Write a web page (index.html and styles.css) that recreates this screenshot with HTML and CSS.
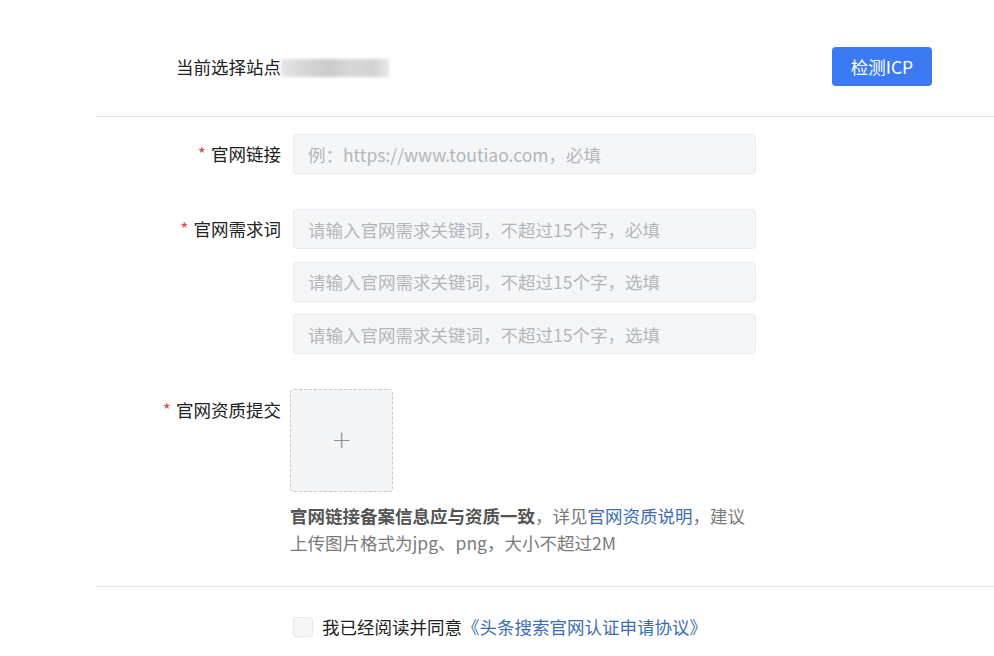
FILE: index.html
```html
<!DOCTYPE html>
<html lang="zh-CN">
<head>
<meta charset="utf-8">
<title>官网认证</title>
<link rel="stylesheet" href="styles.css">
</head>
<body>
<div class="page">
  <div class="header">
    <div class="site">
      <span class="site-label">当前选择站点</span>
      <span class="site-blur"></span>
    </div>
    <button class="btn-primary" type="button">检测ICP</button>
  </div>

  <div class="form">
    <div class="row">
      <div class="label"><span class="star">*</span>官网链接</div>
      <div class="field">
        <div class="input"><span class="ph">例：https://www.toutiao.com，必填</span></div>
      </div>
    </div>

    <div class="row row-gap">
      <div class="label"><span class="star">*</span>官网需求词</div>
      <div class="field stack">
        <div class="input"><span class="ph">请输入官网需求关键词，不超过15个字，必填</span></div>
        <div class="input"><span class="ph">请输入官网需求关键词，不超过15个字，选填</span></div>
        <div class="input"><span class="ph">请输入官网需求关键词，不超过15个字，选填</span></div>
      </div>
    </div>

    <div class="row row-gap">
      <div class="label label-upload"><span class="star">*</span>官网资质提交</div>
      <div class="field field-upload">
        <div class="upload"><span class="plus">+</span></div>
        <p class="help"><strong>官网链接备案信息应与资质一致</strong>，详见<span class="link">官网资质说明</span>，建议<br>上传图片格式为jpg、png，大小不超过2M</p>
      </div>
    </div>
  </div>

  <div class="agree">
    <span class="checkbox"></span>
    <span class="agree-text">我已经阅读并同意<span class="link">《头条搜索官网认证申请协议》</span></span>
  </div>
</div>
</body>
</html>
```

FILE: styles.css
```css
* {
  box-sizing: border-box;
}

html, body {
  margin: 0;
  padding: 0;
  background: #ffffff;
}

body {
  font-family: "Noto Sans CJK SC", "Noto Sans", sans-serif;
  font-size: 17.5px;
  color: #222222;
  width: 994px;
  height: 656px;
  overflow: hidden;
}

.page {
  margin-left: 96px;
}

.header {
  height: 117px;
  border-bottom: 1px solid #e3e3e3;
  display: flex;
  align-items: center;
  justify-content: space-between;
  padding: 18px 62px 0 80px;
}

.site {
  display: flex;
  align-items: center;
  margin-top: 0;
}

.site-label {
  color: #222222;
  line-height: 24px;
}

.site-blur {
  display: block;
  width: 108px;
  height: 18px;
  margin-top: 2px;
  background: linear-gradient(90deg, #e6e6e6 0%, #d4d4d4 25%, #cccccc 45%, #d8d8d8 65%, #d2d2d2 85%, #e8e8e8 100%);
  filter: blur(1.5px);
}

.btn-primary {
  width: 100px;
  height: 39px;
  border: none;
  border-radius: 4px;
  background: #3b7af2;
  color: #ffffff;
  font-family: "Noto Sans CJK SC", "Noto Sans", sans-serif;
  font-size: 17.5px;
  padding: 0;
  margin-top: -1px;
}

.form {
  padding-top: 17px;
  padding-bottom: 30px;
  border-bottom: 1px solid #e3e3e3;
}

.row {
  display: flex;
  align-items: flex-start;
}

.row-gap {
  margin-top: 35px;
}

.label {
  width: 185px;
  text-align: right;
  line-height: 40px;
  white-space: nowrap;
  color: #222222;
}

.label-upload {
  line-height: 42px;
}

.star {
  color: #e04a3f;
  margin-right: 5px;
}

.field {
  margin-left: 12px;
  width: 463px;
}

.stack {
  display: flex;
  flex-direction: column;
  gap: 12.5px;
}

.input {
  height: 40px;
  border: 1px solid #e8eaed;
  border-radius: 4px;
  background: #f5f6f7;
  display: flex;
  align-items: center;
  padding-left: 14px;
}

.ph {
  color: #b3b6bb;
}

.field-upload {
  margin-left: 9px;
}

.upload {
  width: 103px;
  height: 103px;
  border: 1px dashed #c9ccd1;
  border-radius: 4px;
  background: #f4f5f7;
  display: flex;
  align-items: center;
  justify-content: center;
}

.plus {
  color: #8a8d92;
  font-family: "DejaVu Sans", sans-serif;
  font-size: 24px;
  line-height: 1;
  font-weight: 300;
  margin-top: -2px;
}

.help {
  margin: 10px 0 0 0;
  line-height: 27px;
  color: #7a7a7a;
  white-space: nowrap;
}

.help strong {
  color: #555555;
  font-weight: 700;
}

.link {
  color: #3d6db3;
}

.agree {
  display: flex;
  align-items: center;
  margin-top: 30px;
  padding-left: 197px;
}

.checkbox {
  width: 20px;
  height: 20px;
  border: 1px solid #e6e8eb;
  border-radius: 3px;
  background: #f5f6f8;
  margin-right: 9px;
}

.agree-text {
  color: #222222;
  line-height: 20px;
}
```
